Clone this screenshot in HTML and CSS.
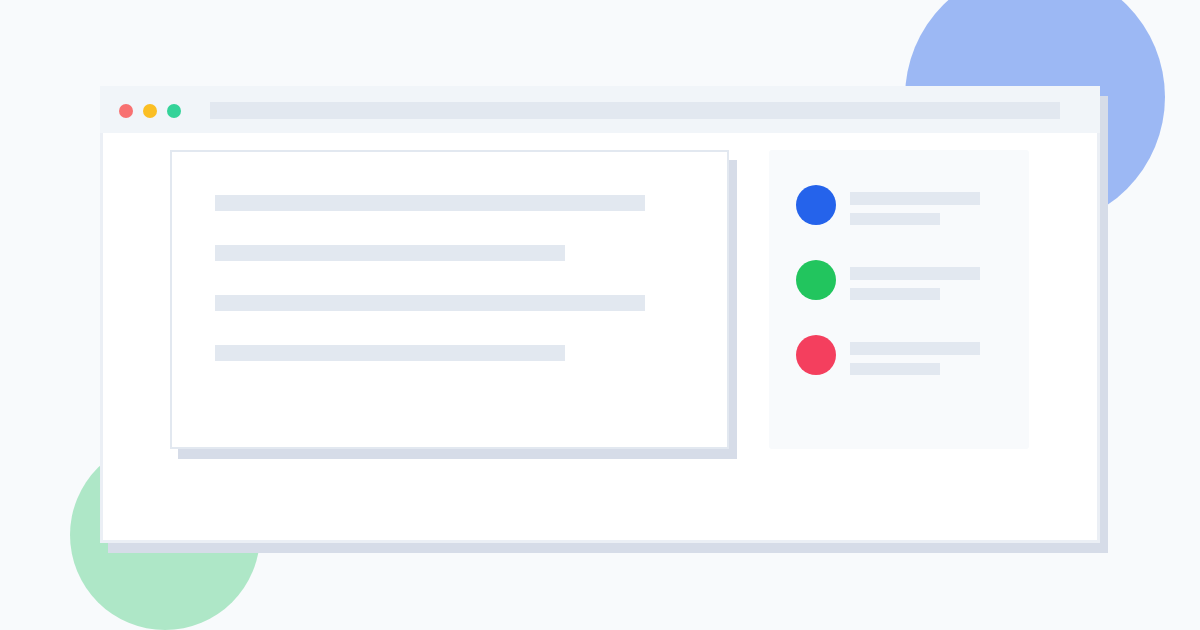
FILE: index.html
```html
<!DOCTYPE html>
<html lang="en">
<head>
  <meta charset="UTF-8">
  <meta name="viewport" content="width=device-width, initial-scale=1.0">
  <title>Browser Mockup</title>
  <link rel="stylesheet" href="styles.css">
</head>
<body>
  <div class="blob blob-blue"></div>
  <div class="blob blob-green"></div>

  <div class="window">
    <div class="topbar">
      <span class="dot red"></span>
      <span class="dot yellow"></span>
      <span class="dot green"></span>
      <div class="address"></div>
    </div>
    <div class="page">
      <div class="card">
        <div class="line long"></div>
        <div class="line short"></div>
        <div class="line long"></div>
        <div class="line short"></div>
      </div>
      <div class="panel">
        <div class="row">
          <span class="avatar blue"></span>
          <div class="meta">
            <div class="meta-title"></div>
            <div class="meta-sub"></div>
          </div>
        </div>
        <div class="row">
          <span class="avatar green"></span>
          <div class="meta">
            <div class="meta-title"></div>
            <div class="meta-sub"></div>
          </div>
        </div>
        <div class="row">
          <span class="avatar rose"></span>
          <div class="meta">
            <div class="meta-title"></div>
            <div class="meta-sub"></div>
          </div>
        </div>
      </div>
    </div>
  </div>
</body>
</html>
```

FILE: styles.css
```css
* { box-sizing: border-box; }
body {
  margin: 0; padding: 86px 0 0 100px;
  width: 1200px; height: 630px; overflow: hidden;
  background: #f8fafc; position: relative;
  font-family: "Liberation Sans", Arial, sans-serif;
}
.blob { position: absolute; border-radius: 50%; }
.blob-blue { left: 905px; top: -33px; width: 260px; height: 260px; background: #9cb8f4; }
.blob-green { left: 70px; top: 440px; width: 190px; height: 190px; background: #aee7c7; }

.window {
  position: relative; width: 1000px; height: 457px;
  background: #fff; border: 3px solid #ebeff5;
  box-shadow: 8px 10px 0 #d6dce8;
}
.topbar {
  display: flex; align-items: center; gap: 10px;
  height: 47px; margin: -3px -3px 0;
  padding: 2px 40px 0 19px;
  background: #f1f5f9;
}
.dot { width: 14px; height: 14px; border-radius: 50%; flex: none; }
.dot.red { background: #f87171; }
.dot.yellow { background: #fbbf24; }
.dot.green { background: #34d399; }
.address { flex: 1; height: 17px; background: #e2e8f0; margin-left: 19px; }

.page { display: flex; gap: 40px; padding: 17px 0 0 67px; }
.card {
  width: 559px; height: 299px; background: #fff;
  border: 2px solid #e2e8f0; box-shadow: 8px 10px 0 #d6dce8;
  padding: 43px 0 0 43px;
  display: flex; flex-direction: column; gap: 34px;
}
.line { height: 16px; background: #e2e8f0; }
.line.long { width: 430px; }
.line.short { width: 350px; }

.panel {
  width: 260px; height: 299px; background: #f8fafc; border-radius: 3px;
  padding: 35px 0 0 27px;
  display: flex; flex-direction: column; gap: 35px;
}
.row { display: flex; gap: 14px; height: 40px; }
.avatar { width: 40px; height: 40px; border-radius: 50%; flex: none; }
.avatar.blue { background: #2563eb; }
.avatar.green { background: #22c55e; }
.avatar.rose { background: #f43f5e; }
.meta { padding-top: 7px; display: flex; flex-direction: column; gap: 8px; }
.meta-title { width: 130px; height: 14px; background: #e2e8f0; }
.meta-sub { width: 90px; height: 12px; background: #e2e8f0; }
```
